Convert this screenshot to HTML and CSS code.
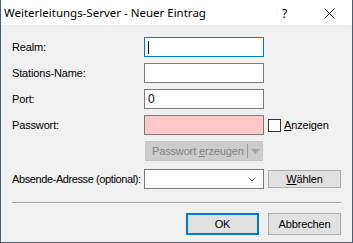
FILE: index.html
```html
<!DOCTYPE html>
<html>
<head>
<meta charset="utf-8">
<link rel="stylesheet" href="styles.css">
</head>
<body>
<div class="win">
  <div class="titlebar">
    <span class="title">Weiterleitungs-Server - Neuer Eintrag</span>
    <span class="help">?</span>
    <svg class="close" width="11" height="11" viewBox="0 0 11 11"><path d="M0.5 0.5 L10.5 10.5 M10.5 0.5 L0.5 10.5" stroke="#000" stroke-width="1" fill="none"/></svg>
  </div>
  <div class="body">
    <div class="row r-realm">
      <label class="lbl">Realm:</label>
      <div class="field focus"><span class="caret"></span></div>
    </div>
    <div class="row">
      <label class="lbl">Stations-Name:</label>
      <div class="field"></div>
    </div>
    <div class="row">
      <label class="lbl">Port:</label>
      <div class="field"><span class="val">0</span></div>
    </div>
    <div class="row">
      <label class="lbl">Passwort:</label>
      <div class="field pink"></div>
      <span class="check"></span>
      <span class="chk-lbl"><u>A</u>nzeigen</span>
    </div>
    <div class="row r-gen">
      <span class="lbl"></span>
      <div class="genbtn">
        <span class="gentext">Passwort <u>e</u>rzeugen</span>
        <span class="gensep"></span>
        <svg class="genarrow" width="9" height="5" viewBox="0 0 9 5"><path d="M0 0 L9 0 L4.5 5 Z" fill="#a6a6a6"/></svg>
      </div>
    </div>
    <div class="row r-combo">
      <label class="lbl tight">Absende-Adresse (optional):</label>
      <div class="field combo">
        <svg class="chev" width="8" height="5" viewBox="0 0 8 5"><path d="M0.5 0.5 L4 4 L7.5 0.5" stroke="#555" stroke-width="1" fill="none"/></svg>
      </div>
      <button class="btn wbtn"><u>W</u>ählen</button>
    </div>
    <div class="sep"></div>
    <div class="footer">
      <button class="btn okbtn">OK</button>
      <button class="btn">Abbrechen</button>
    </div>
  </div>
</div>
</body>
</html>
```
FILE: styles.css
```css
html, body { margin: 0; padding: 0; }
body { width: 353px; height: 243px; overflow: hidden; font-family: "Liberation Sans", Arial, sans-serif; font-size: 11px; letter-spacing: -0.15px; color: #000; }
.win { box-sizing: border-box; width: 353px; height: 243px; border: 1px solid #3e5f7f; border-top: none; background: #f0f0f0; display: flex; flex-direction: column; }
.titlebar { height: 25px; background: #fff; display: flex; align-items: center; position: relative; letter-spacing: 0; }
.title { font-family: "Noto Sans", "Open Sans", sans-serif; font-size: 11.5px; padding-left: 3px; flex: 1; }
.help { position: absolute; left: 281px; top: 5px; font-family: "Noto Sans", sans-serif; font-size: 12px; }
.close { position: absolute; left: 323px; top: 8px; }
.body { padding: 12px 0 0 11px; display: flex; flex-direction: column; }
.row { display: flex; align-items: center; height: 20px; margin-bottom: 6px; }
.lbl { width: 132px; flex: none; white-space: nowrap; }
.lbl.tight { letter-spacing: -0.4px; }
.field { box-sizing: border-box; width: 120px; height: 20px; border: 1px solid #7a7a7a; background: #fff; display: flex; align-items: center; padding-left: 3px; flex: none; }
.field.focus { border-color: #0078d7; }
.caret { width: 1px; height: 13px; background: #000; }
.val { font-size: 12px; }
.field.pink { background: #ffc8c8; }
.check { box-sizing: border-box; width: 13px; height: 13px; border: 1px solid #333; background: #fff; margin-left: 4px; }
.chk-lbl { margin-left: 3px; }
.r-gen { margin-bottom: 8px; }
.genbtn { box-sizing: border-box; width: 118px; height: 20px; margin-left: 1px; background: #cccccc; border: 1px solid #c4c4c4; display: flex; align-items: center; color: #838383; }
.gentext { width: 101px; padding-left: 6px; box-sizing: border-box; white-space: nowrap; }
.gensep { width: 1px; height: 14px; background: #9a9a9a; }
.genarrow { margin-left: 3px; }
.combo { justify-content: flex-end; padding-right: 7px; }
.btn { box-sizing: border-box; height: 18px; width: 73px; border: 1px solid #adadad; background: #e1e1e1; font-family: "Liberation Sans", Arial, sans-serif; font-size: 11px; letter-spacing: -0.15px; color: #000; padding: 0; }
.wbtn { margin-left: 4px; }
.r-combo { height: 20px; margin-bottom: 0; }
.sep { width: 329px; height: 1px; background: #a0a0a0; margin-top: 13px; border-bottom: 1px solid #fff; }
.footer { display: flex; justify-content: flex-end; gap: 9px; padding-right: 11px; margin-top: 9px; }
.footer .btn { height: 22px; }
.okbtn { border: 2px solid #0078d7; }
```
